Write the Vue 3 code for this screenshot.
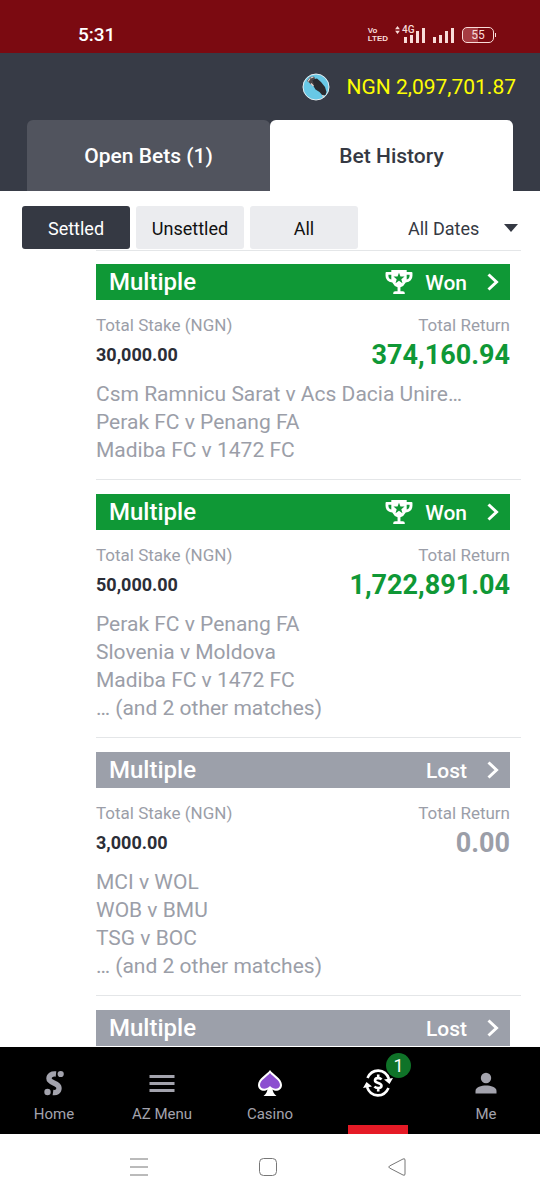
<script setup>
import { ref } from 'vue'

const tab = ref('history')
const filter = ref('Settled')
const filters = ['Settled', 'Unsettled', 'All']
const dates = ref('All Dates')

const bets = [
  {
    id: 1,
    status: 'Won',
    stake: '30,000.00',
    payout: '374,160.94',
    matches: ['Csm Ramnicu Sarat v Acs Dacia Unire…', 'Perak FC v Penang FA', 'Madiba FC v 1472 FC'],
  },
  {
    id: 2,
    status: 'Won',
    stake: '50,000.00',
    payout: '1,722,891.04',
    matches: ['Perak FC v Penang FA', 'Slovenia v Moldova', 'Madiba FC v 1472 FC', '… (and 2 other matches)'],
  },
  {
    id: 3,
    status: 'Lost',
    stake: '3,000.00',
    payout: '0.00',
    matches: ['MCI v WOL', 'WOB v BMU', 'TSG v BOC', '… (and 2 other matches)'],
  },
  { id: 4, status: 'Lost' },
]
</script>

<template>
  <div class="screen">
    <div class="status">
      <span class="clock">5:31</span>
      <div class="signals">
        <span class="volte"><span>Vo</span><span>LTED</span></span>
        <span class="mobile">
          <svg class="updown" viewBox="0 0 6 10" aria-hidden="true"><path d="M3 0 6 4H0zM3 10 0 6h6z" /></svg>
          <span class="gen">4G</span>
          <svg class="bars" viewBox="0 0 22 16" aria-hidden="true"><path d="M0 10h3v6H0zM6 8h3v8H6zM12 4h3v12h-3zM18 1h3v15h-3z" /></svg>
        </span>
        <svg class="bars" viewBox="0 0 22 16" aria-hidden="true"><path d="M0 10h3v6H0zM6 8h3v8H6zM12 4h3v12h-3zM18 1h3v15h-3z" /></svg>
        <span class="battery">55</span>
      </div>
    </div>

    <header class="header">
      <div class="balance">
        <svg class="avatar" viewBox="0 0 28 28" aria-hidden="true">
          <circle cx="14" cy="14" r="13" fill="#68c8e6" stroke="#e6eef1" stroke-width="1" />
          <path d="M10 6.500l5-1 4 3.500 4 5 1.500 5-1 3-3 .5-3-3.500-4-2.500-3-5z" fill="#292a2f" />
          <path d="M5 8l3-4 4-.5 1 2-3 2 2 3.500-2 1.500-3-3z" fill="#4a4244" />
          <path d="M6 8.500l2-3M9 10.500l2.500 2.500M8.500 5l3-1M20.500 22l1.500 2.500" fill="none" stroke="#e3d3cd" stroke-width="1.300" />
        </svg>
        <span>NGN 2,097,701.87</span>
      </div>
      <div class="tabs" role="tablist">
        <button type="button" role="tab" class="tab" :class="{ on: tab === 'open' }" :aria-selected="tab === 'open'" @click="tab = 'open'">Open Bets (1)</button>
        <button type="button" role="tab" class="tab" :class="{ on: tab === 'history' }" :aria-selected="tab === 'history'" @click="tab = 'history'">Bet History</button>
      </div>
    </header>

    <main class="content">
      <div class="filters">
        <button v-for="f in filters" :key="f" type="button" class="filter" :class="{ on: filter === f }" @click="filter = f">{{ f }}</button>
        <div class="dates">
          <select v-model="dates" aria-label="Dates">
            <option>All Dates</option>
          </select>
          <svg viewBox="0 0 14 8" aria-hidden="true"><path d="M0 0h14L7 8z" /></svg>
        </div>
      </div>

      <div class="list">
        <article v-for="bet in bets" :key="bet.id" class="bet" :class="bet.status.toLowerCase()">
          <a href="#" class="bar">
            <span class="kind">Multiple</span>
            <svg v-if="bet.status === 'Won'" class="trophy" viewBox="0 0 28 26" aria-hidden="true">
              <path fill-rule="evenodd" d="M6 0h16v2h5q1 0 1 1v3q0 6-7 7-2 4-5.500 5v4H18q2 0 2 2v1H8v-1q0-2 2-2h2.500v-4Q9 17 7 13 0 12 0 6V3q0-1 1-1h5zM6 5H3v1q0 3 3 4zM22 5v5q3-1 3-4V5zM14 2.800l-1.500 4H8.200l3.400 2.700-1.200 4.200 3.600-2.400 3.600 2.400-1.200-4.200 3.400-2.700h-4.300z" />
            </svg>
            <span class="result">{{ bet.status }}</span>
            <svg class="chevron" viewBox="0 0 12 18" aria-hidden="true"><path d="M1.500 1.500 9.500 9l-8 7.500" /></svg>
          </a>
          <div v-if="bet.matches" class="body">
            <dl class="totals">
              <div>
                <dt>Total Stake (NGN)</dt>
                <dd class="stake">{{ bet.stake }}</dd>
              </div>
              <div class="right">
                <dt>Total Return</dt>
                <dd class="payout">{{ bet.payout }}</dd>
              </div>
            </dl>
            <ul class="matches">
              <li v-for="m in bet.matches" :key="m">{{ m }}</li>
            </ul>
          </div>
        </article>
      </div>
    </main>

    <nav class="nav">
      <a href="#" class="item">
        <svg class="icon" viewBox="0 0 28 28" aria-hidden="true">
          <path d="M16 5C11.500 4.500 9 6.500 9 9.500c0 5 10 4 10 9.500 0 3.500-2.500 5-6 4.500" fill="none" stroke="currentColor" stroke-width="5.400" />
          <circle cx="20.700" cy="5" r="3.100" /><circle cx="7.500" cy="23" r="3.200" />
        </svg>
        <span>Home</span>
      </a>
      <a href="#" class="item">
        <svg class="icon" viewBox="0 0 28 28" aria-hidden="true"><path d="M1.500 6h25v3h-25zM1.500 13h25v3h-25zM1.500 20h25v3h-25z" /></svg>
        <span>AZ Menu</span>
      </a>
      <a href="#" class="item">
        <svg class="icon" viewBox="0 0 28 28" aria-hidden="true">
          <path d="M14 1C11 5.500 2 9.500 2 16c0 5 6 7.500 9.500 4.500-.5 2.500-1.500 4.500-4 6.500h13c-2.500-2-3.500-4-4-6.500 3.500 3 9.500.5 9.500-4.500C26 9.500 17 5.500 14 1z" fill="#fff" />
          <path d="M14 4C11 8 4 11 4 16c0 4 6 5.500 10 1 4 4.500 10 3 10-1C24 11 17 8 14 4z" fill="#8c4fd0" />
        </svg>
        <span>Casino</span>
      </a>
      <a href="#" class="item active" aria-label="My bets, 1 open" aria-current="page">
        <svg class="icon" viewBox="0 0 28 28" aria-hidden="true">
          <g fill="none" stroke="#fff" stroke-width="2.600">
            <path d="M3.500 9C8-1 21-1 25 10M24.500 19C20 29 7 29 3 18" />
            <path d="M17.500 10.500C16 8.500 11 8.500 11 11.500c0 3 6.500 2 6.500 5.200 0 3-5.500 2.800-7 .8M14.200 5.500v4M14.200 18.500v4" />
          </g>
          <path d="M20 10.500l9-1.500-3.500 6zM8 17.500L-1 19l3.500-6z" fill="#fff" />
        </svg>
        <span class="badge">1</span>
      </a>
      <a href="#" class="item">
        <svg class="icon" viewBox="0 0 28 28" aria-hidden="true"><circle cx="14" cy="9" r="5.200" /><path d="M3.500 24.500v-2.500c0-4 6-5.500 10.500-5.500s10.500 1.500 10.500 5.500v2.500z" /></svg>
        <span>Me</span>
      </a>
    </nav>

    <div class="system">
      <button type="button" aria-label="Recent apps"><svg viewBox="0 0 20 20"><path d="M1 2h18M1 10h18M1 18h18" /></svg></button>
      <button type="button" aria-label="Home screen"><svg viewBox="0 0 20 20"><rect x="1.500" y="1.500" width="17" height="17" rx="4" /></svg></button>
      <button type="button" aria-label="Back"><svg viewBox="0 0 20 20"><path d="M2.500 9Q1 10 2.500 11L16 18Q18 19 18 17V3Q18 1 16 2z" /></svg></button>
    </div>
  </div>
</template>

<style>
body {
  margin: 0;
  background: #fff;
}
</style>

<style scoped>
.screen {
  display: flex;
  flex-direction: column;
  height: 100vh;
  overflow: hidden;
  font-family: Roboto, "Liberation Sans", sans-serif;
  color: #353943;
}
button,
select {
  border: 0;
  margin: 0;
  padding: 0;
  font: inherit;
  color: inherit;
  background: none;
}
a {
  color: inherit;
  text-decoration: none;
}
svg {
  display: block;
  flex: none;
  overflow: visible;
}

/* status bar */
.status {
  display: flex;
  flex: none;
  align-items: flex-end;
  justify-content: space-between;
  box-sizing: border-box;
  height: 53px;
  padding: 0 46px 8px 78px;
  background: #7b0a11;
  color: #f9dcd9;
}
.clock {
  font-size: 19px;
  line-height: 20px;
  font-weight: 500;
  color: #fff;
}
.signals {
  display: flex;
  align-items: center;
  gap: 7px;
  height: 20px;
}
.volte {
  display: flex;
  flex-direction: column;
  font-family: "Liberation Sans", sans-serif;
  font-size: 8px;
  line-height: 8px;
  font-weight: 700;
}
.mobile {
  position: relative;
  display: flex;
  padding-left: 9px;
}
.updown {
  position: absolute;
  left: 0;
  top: -1px;
  width: 5px;
  height: 8px;
  fill: currentColor;
}
.gen {
  position: absolute;
  left: 7px;
  top: -2px;
  font-size: 10px;
  line-height: 10px;
  font-weight: 500;
}
.bars {
  width: 22px;
  height: 16px;
  fill: currentColor;
}
.battery {
  position: relative;
  box-sizing: border-box;
  width: 32px;
  height: 16px;
  border: 1px solid currentColor;
  border-radius: 5px;
  background: linear-gradient(90deg, #a63c42 50%, transparent 50%);
  font-size: 12px;
  line-height: 14px;
  text-align: center;
}
.battery::after {
  content: "";
  position: absolute;
  right: -3px;
  top: 5px;
  width: 1px;
  height: 4px;
  background: currentColor;
}

/* header */
.header {
  flex: none;
  background: #373b46;
}
.balance {
  display: flex;
  align-items: center;
  justify-content: flex-end;
  gap: 17px;
  height: 67px;
  padding-right: 24px;
  font-size: 21px;
  color: #fdfd03;
}
.avatar {
  width: 28px;
  height: 28px;
}
.tabs {
  display: flex;
  padding: 0 27px;
}
.tab {
  flex: 1;
  height: 71px;
  border-radius: 6px 6px 0 0;
  font-size: 21px;
  font-weight: 500;
  background: #51545e;
  color: #fff;
}
.tab.on {
  background: #fff;
  color: #353943;
}

/* filters */
.content {
  flex: 1;
  min-height: 0;
  overflow: hidden;
}
.filters {
  display: flex;
  gap: 6px;
  padding: 15px 22px 1px;
  font-size: 18px;
}
.filter {
  width: 108px;
  height: 43px;
  padding-top: 2px;
  border-radius: 3px;
  background: #ebecef;
  color: #111;
}
.filter.on {
  background: #353943;
  color: #fff;
}
.dates {
  display: grid;
  flex: 1;
  align-items: center;
  justify-content: end;
}
.dates select {
  grid-area: 1 / 1;
  width: 110px;
  height: 43px;
  padding-top: 2px;
  appearance: none;
}
.dates svg {
  grid-area: 1 / 1;
  justify-self: end;
  width: 14px;
  height: 8px;
  fill: #353943;
  pointer-events: none;
}

/* bets */
.list {
  margin: 0 19px 0 96px;
  padding-top: 13px;
  border-top: 1px solid #e4e6e8;
}
.bet {
  margin-bottom: 14px;
  border-bottom: 1px solid #e4e6e8;
}
.bet:last-child {
  border-bottom: 0;
}
.bar {
  display: flex;
  align-items: center;
  height: 36px;
  margin-right: 11px;
  padding: 0 11px 0 13px;
  background: #9ca0aa;
  color: #fff;
  font-weight: 500;
}
.won .bar {
  background: #0f9836;
}
.kind {
  flex: 1;
  font-size: 24px;
}
.trophy {
  width: 28px;
  height: 25px;
  margin-right: 12px;
  fill: currentColor;
}
.result {
  padding-top: 2px;
  font-size: 21px;
}
.chevron {
  width: 12px;
  height: 18px;
  margin-left: 20px;
  fill: none;
  stroke: currentColor;
  stroke-width: 3;
}
.body {
  padding: 15px 11px 15px 0;
}
.totals {
  display: flex;
  justify-content: space-between;
  margin: 0 0 10px;
}
.right {
  text-align: right;
}
dt {
  margin-bottom: 5px;
  font-size: 17px;
  line-height: 20px;
  color: #9b9ea8;
}
dd {
  margin: 0;
  line-height: 30px;
  font-weight: 700;
}
.stake {
  font-size: 18px;
  color: #2b2e37;
}
.payout {
  font-size: 27px;
  color: #9b9ea8;
}
.won .payout {
  color: #0f9836;
}
.matches {
  margin: 0;
  padding: 0;
  list-style: none;
  font-size: 21px;
  line-height: 28px;
  color: #9b9ea8;
}

/* bottom navigation */
.nav {
  display: flex;
  flex: none;
  height: 87px;
  background: #000;
  color: #a3a3ad;
}
.item {
  position: relative;
  display: flex;
  flex: 1;
  flex-direction: column;
  align-items: center;
  gap: 8px;
  padding-top: 22px;
  font-size: 15px;
  line-height: 18px;
}
.icon {
  width: 28px;
  height: 28px;
  fill: currentColor;
}
.active::after {
  content: "";
  position: absolute;
  left: 50%;
  bottom: 0;
  width: 60px;
  height: 9px;
  margin-left: -30px;
  background: #e51a26;
}
.badge {
  position: absolute;
  top: 6px;
  left: 50%;
  width: 25px;
  height: 25px;
  margin-left: 8px;
  border-radius: 50%;
  background: #0f7328;
  color: #fff;
  font-size: 18px;
  line-height: 25px;
  text-align: center;
}

/* system keys */
.system {
  display: flex;
  flex: none;
  align-items: center;
  justify-content: center;
  gap: 109px;
  height: 66px;
  padding-right: 5px;
}
.system svg {
  width: 20px;
  height: 20px;
  fill: none;
  stroke: #777;
  stroke-width: 1;
}
</style>
